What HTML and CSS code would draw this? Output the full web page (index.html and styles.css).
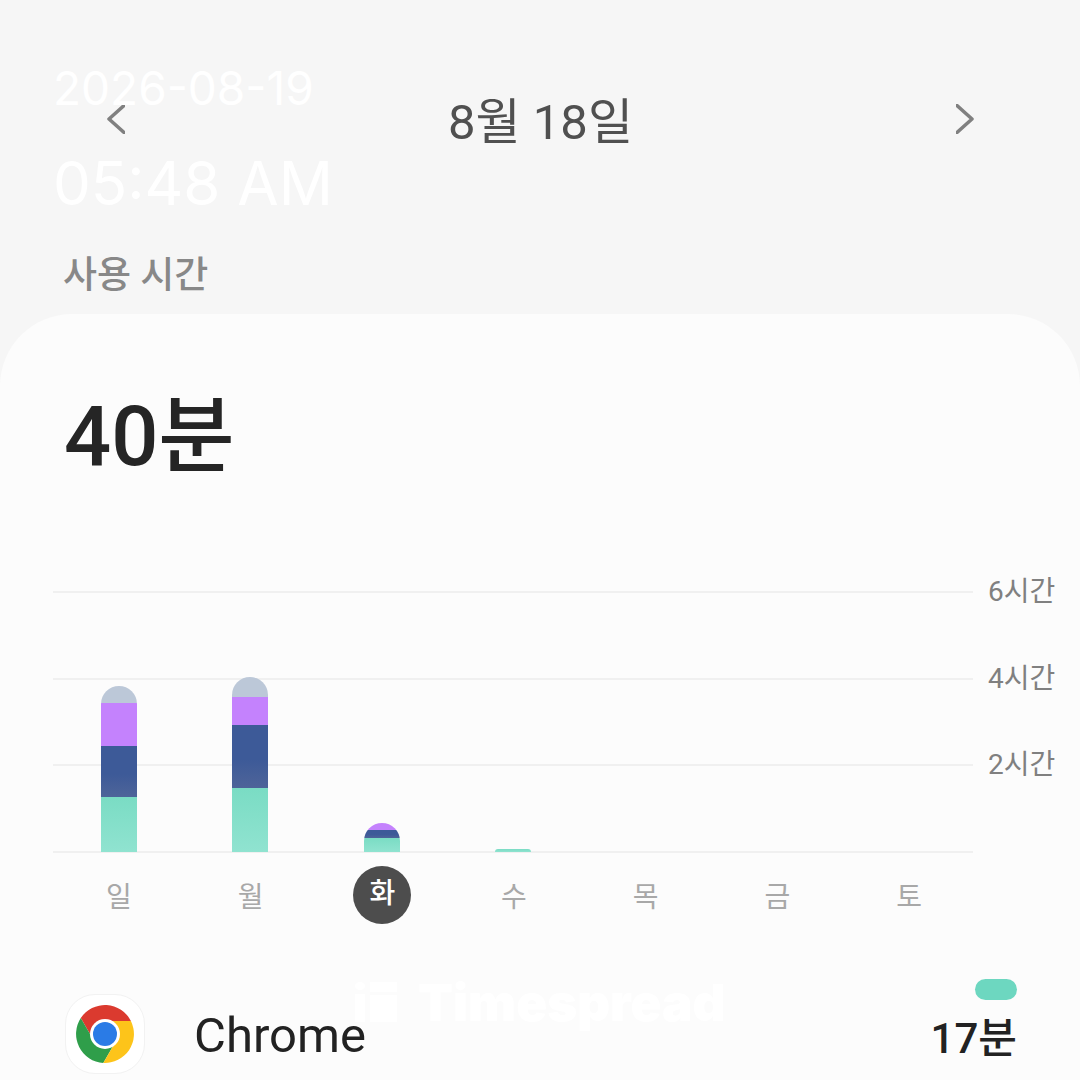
FILE: index.html
```html
<!DOCTYPE html>
<html>
<head>
<meta charset="utf-8">
<link rel="stylesheet" href="styles.css">
<title>사용 시간</title>
</head>
<body>

<div class="top">
  <div class="datebar">
    <svg class="chev" width="18" height="30" viewBox="0 0 18 30"><path d="M17 1.5 2 15l15 13.5"/></svg>
    <div class="date">8월 18일</div>
    <svg class="chev" width="18" height="30" viewBox="0 0 18 30"><path d="M1 1.5 16 15 1 28.5"/></svg>
  </div>
  <div class="section">사용 시간</div>
</div>

<div class="card">
  <div class="total">40분</div>

  <div class="chart">
    <div class="plot">
      <div class="lines">
        <div class="line"></div>
        <div class="line"></div>
        <div class="line"></div>
      </div>
      <div class="bars">
        <div class="col">
          <div class="bar">
            <div class="seg gray h17"></div>
            <div class="seg purple h43"></div>
            <div class="seg blue h51"></div>
            <div class="seg teal h55"></div>
          </div>
        </div>
        <div class="col">
          <div class="bar">
            <div class="seg gray h20"></div>
            <div class="seg purple h28"></div>
            <div class="seg blue h63"></div>
            <div class="seg teal h64"></div>
          </div>
        </div>
        <div class="col">
          <div class="bar">
            <div class="seg purple h7"></div>
            <div class="seg blue h8"></div>
            <div class="seg teal h14"></div>
          </div>
        </div>
        <div class="col">
          <div class="bar">
            <div class="seg teal h3"></div>
          </div>
        </div>
        <div class="col"></div>
        <div class="col"></div>
        <div class="col"></div>
      </div>
    </div>
    <div class="axis">
      <div>6시간</div>
      <div>4시간</div>
      <div>2시간</div>
    </div>
  </div>

  <div class="days">
    <div class="day">일</div>
    <div class="day">월</div>
    <div class="day"><span class="today">화</span></div>
    <div class="day">수</div>
    <div class="day">목</div>
    <div class="day">금</div>
    <div class="day">토</div>
  </div>

  <div class="app">
    <div class="appicon">
      <svg width="58" height="58" viewBox="0 0 58 58">
        <path fill="#db3a2f" d="M54.9 16A29 29 0 0 0 4.8 13.07L17.74 35.5 29 16Z"/>
        <path fill="#2f9e4a" d="M4.8 13.07A29 29 0 0 0 27.3 57.9L40.26 35.5H17.74Z"/>
        <path fill="#fdc41a" d="M27.3 57.9A29 29 0 0 0 54.9 16H29L40.26 35.5Z"/>
        <circle cx="29" cy="29" r="15" fill="#fff"/>
        <circle cx="29" cy="29" r="12" fill="#2a7be6"/>
      </svg>
    </div>
    <div class="appname">Chrome</div>
    <div class="usage">
      <div class="pill"></div>
      <div class="mins">17분</div>
    </div>
  </div>
</div>

<div class="stamp">
  <div class="stamp-date">2026-08-19</div>
  <div class="stamp-time">05:48 AM</div>
</div>
<div class="brand">
  <svg width="42" height="40" viewBox="0 0 42 40"><path d="M0 4a5 4 0 0 1 10 0 5 4 0 0 1-10 0ZM0 12h10v28H0ZM15 0h27v10H15ZM15 13h27v27H15Z"/></svg>
  <span>Timespread</span>
</div>

</body>
</html>
```

FILE: styles.css
```css
html, body { margin: 0; height: 1080px; overflow: hidden; }
body {
  position: relative;
  background: #f6f6f6;
  font-family: Roboto, "Noto Sans CJK KR", sans-serif;
}

.top { height: 314px; }
.datebar {
  height: 238px;
  padding: 0 106px 0 107px;
  box-sizing: border-box;
  display: flex;
  align-items: center;
  justify-content: space-between;
}
.chev { fill: none; stroke: #808080; stroke-width: 3.5; stroke-linecap: round; stroke-linejoin: round; }
.date { font-size: 49px; color: #505050; padding-bottom: 4px; }
.section {
  padding-left: 63px;
  font-size: 37px;
  line-height: 76px;
  font-weight: 500;
  color: #888;
}

.card {
  height: 766px;
  background: #fcfcfc;
  border-radius: 72px 72px 0 0;
  overflow: hidden;
}
.total {
  padding: 73px 0 0 64px;
  height: 100px;
  line-height: 100px;
  font-size: 83px;
  font-weight: 500;
  color: #252525;
}

.chart {
  display: flex;
  margin: 104px 0 0 53px;
}
.plot {
  width: 920px;
  display: grid;
}
.lines, .bars { grid-area: 1 / 1; }
.line { height: 84.6px; border-top: 2px solid #f0f0f0; }
.lines { border-bottom: 2px solid #f0f0f0; }
.bars {
  display: grid;
  grid-template-columns: repeat(7, 1fr);
  align-items: end;
  padding-bottom: 1px;
}
.col { display: flex; justify-content: center; }
.bar {
  width: 36px;
  border-radius: 18px 18px 0 0;
  overflow: hidden;
}
.seg.gray { background: #bcc8d8; }
.seg.purple { background: #c482fd; }
.seg.blue { background: linear-gradient(#3d5a98 55%, #4e6499); }
.seg.teal { background: linear-gradient(#7adcc4, #90e3d0); }
.h3 { height: 3px; }
.h7 { height: 7px; }
.h8 { height: 8px; }
.h14 { height: 14px; }
.h17 { height: 17px; }
.h20 { height: 20px; }
.h28 { height: 28px; }
.h43 { height: 43px; }
.h51 { height: 51px; }
.h55 { height: 55px; }
.h63 { height: 63px; }
.h64 { height: 64px; }

.axis {
  margin: -18px 0 0 15px;
  font-size: 28px;
  color: #808080;
}
.axis div { height: 86.6px; line-height: 38px; }

.days {
  width: 922px;
  margin: 13px 0 0 53px;
  display: grid;
  grid-template-columns: repeat(7, 1fr);
  align-items: center;
  text-align: center;
  height: 58px;
  font-size: 28px;
  color: #a8a8a8;
}
.today {
  display: inline-block;
  width: 58px;
  height: 58px;
  line-height: 56px;
  border-radius: 50%;
  background: #4d4d4d;
  color: #fff;
  font-weight: 500;
}

.app {
  height: 80px;
  margin-top: 70px;
  padding: 0 63px 0 65px;
  display: flex;
  align-items: center;
}
.appicon {
  width: 80px;
  height: 80px;
  box-sizing: border-box;
  border: 1px solid #f2f2f2;
  border-radius: 30px;
  background: #fff;
  display: flex;
  align-items: center;
  justify-content: center;
}
.appname { margin: 3px 0 0 49px; font-size: 49px; color: #222; flex: 1; }
.usage {
  align-self: flex-start;
  margin-top: -15px;
  display: flex;
  flex-direction: column;
  align-items: flex-end;
}
.pill { width: 42px; height: 21px; border-radius: 11px; background: #6dd7c0; }
.mins { margin-top: 11px; font-size: 42px; line-height: 56px; font-weight: 500; color: #222; }

/* burnt-in overlays from the screenshot */
.stamp { position: absolute; left: 53px; top: 58px; color: #fff; font-family: Inter, sans-serif; }
.stamp-date { font-size: 46px; line-height: 60px; }
.stamp-time { font-size: 60px; line-height: 72px; margin-top: 29px; }
.brand {
  position: absolute;
  left: 355px;
  top: 982px;
  height: 40px;
  display: flex;
  align-items: center;
  gap: 21px;
  color: #fff;
  font-family: Inter, sans-serif;
  font-weight: 900;
  font-size: 51px;
}
.brand svg { fill: #fff; }
```
